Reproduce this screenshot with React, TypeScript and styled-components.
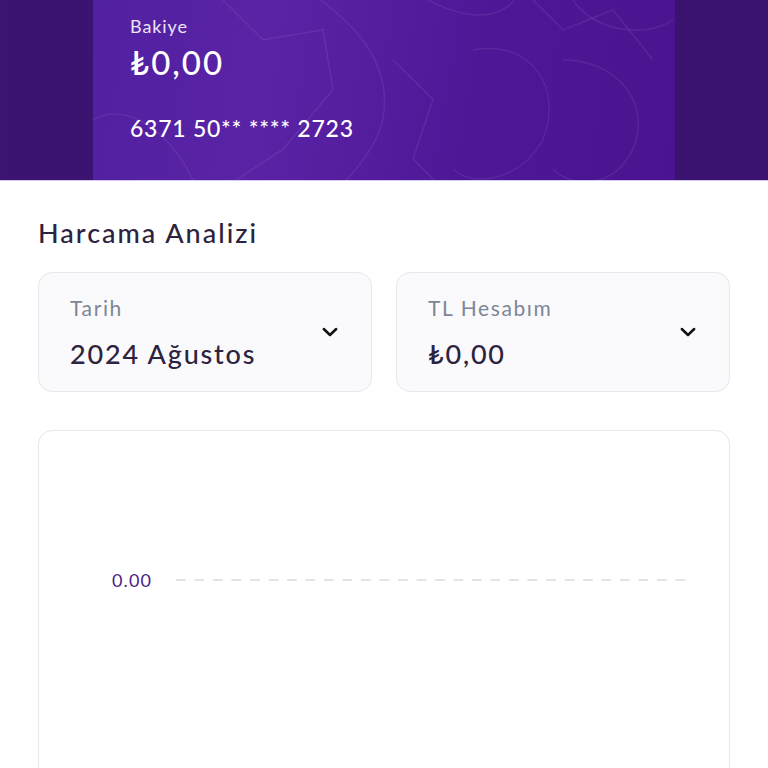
import React from "react";
import styled, { createGlobalStyle } from "styled-components";

const Global = createGlobalStyle`
  html, body { margin: 0; padding: 0; background: #ffffff; }
  body { font-family: "Lato", "Noto Sans", sans-serif; }
  * { box-sizing: border-box; }
`;

const Page = styled.div`
  width: 768px;
  height: 768px;
  overflow: hidden;
  background: #ffffff;
  display: flex;
  flex-direction: column;
`;

const Header = styled.div`
  height: 181px;
  flex: none;
  background: linear-gradient(90deg, #3b1472 0%, #3a1270 100%);
  display: flex;
  justify-content: center;
  border-bottom: 1px solid #d9c8f2;
`;

const Card = styled.div`
  position: relative;
  width: 582px;
  height: 100%;
  overflow: hidden;
  background: linear-gradient(100deg, #5120a0 0%, #5a23a6 30%, #4d1896 65%, #4a1490 100%);
  padding: 0 37px;
  display: flex;
  flex-direction: column;
  color: #ffffff;
`;

const Pattern = styled.svg`
  position: absolute;
  inset: 0;
  width: 100%;
  height: 100%;
  pointer-events: none;
`;

const CardContent = styled.div`
  position: relative;
  display: flex;
  flex-direction: column;
`;

const BalanceLabel = styled.div`
  margin-top: 14px;
  font-size: 18px;
  line-height: 24px;
  color: #ece4f8;
  letter-spacing: 0.9px;
`;

const BalanceValue = styled.div`
  margin-top: 9px;
  font-size: 33px;
  line-height: 30px;
  font-weight: 500;
  letter-spacing: 2px;
`;

const CardNumber = styled.div`
  margin-top: 38px;
  font-size: 23px;
  line-height: 26px;
  font-weight: 500;
  letter-spacing: 0.75px;
`;

const Body = styled.div`
  padding: 0 38px;
  display: flex;
  flex-direction: column;
`;

const Title = styled.h2`
  margin: 36px 0 0;
  font-size: 27px;
  line-height: 32px;
  font-weight: 500;
  color: #2d2340;
  letter-spacing: 2px;
`;

const SelectRow = styled.div`
  margin-top: 23px;
  display: grid;
  grid-template-columns: 1fr 1fr;
  gap: 24px;
`;

const Select = styled.div`
  height: 120px;
  border: 1.5px solid #e7e7ec;
  border-radius: 14px;
  background: #fafafc;
  padding: 0 33px 0 31px;
  display: flex;
  align-items: center;
  justify-content: space-between;
`;

const SelectText = styled.div`
  display: flex;
  flex-direction: column;
  gap: 18px;
  margin-top: 2px;
`;

const SelectLabel = styled.div`
  font-size: 21px;
  line-height: 24px;
  color: #7d8696;
  letter-spacing: 1.6px;
`;

const SelectValue = styled.div`
  font-size: 27px;
  line-height: 32px;
  font-weight: 500;
  color: #2d2340;
  letter-spacing: 1.8px;
`;

const Chart = styled.div`
  margin-top: 38px;
  height: 360px;
  border: 1.5px solid #e7e7ec;
  border-radius: 14px;
  background: #ffffff;
  padding: 137px 36px 0 73px;
  display: flex;
  flex-direction: column;
`;

const AxisRow = styled.div`
  display: flex;
  align-items: center;
  gap: 20px;
`;

const AxisLabel = styled.div`
  font-size: 18px;
  line-height: 24px;
  color: #4a1d8a;
  width: 44px;
  letter-spacing: 1.1px;
`;

const DashLine = styled.div`
  flex: 1;
  height: 2px;
  background-image: linear-gradient(90deg, #e3e3e8 0 10px, transparent 10px 18px);
  background-size: 18.5px 2px;
  background-repeat: repeat-x;
`;

const Chevron = () => (
  <svg width="16" height="10" viewBox="0 0 16 10" fill="none">
    <path d="M1.8 2 L8 8 L14.2 2" stroke="#111" strokeWidth="2.5" strokeLinecap="round" strokeLinejoin="round" />
  </svg>
);

export default function App() {
  return (
    <Page>
      <Global />
      <Header>
        <Card>
          <Pattern viewBox="0 0 582 181" preserveAspectRatio="none">
            <g fill="none" stroke="rgba(255,255,255,0.07)" strokeWidth="1.5">
              <path d="M120 -10 L170 40 L230 30 L240 90 L190 150 L130 190" />
              <path d="M200 -20 C260 20 300 60 290 120 C280 160 250 180 240 200" />
              <path d="M320 -10 C360 20 420 30 430 -20" />
              <path d="M300 60 L340 100 L320 160 L360 200" />
              <path d="M380 50 C440 40 470 90 450 140 C430 180 380 190 360 170" />
              <path d="M420 -20 L470 30 L520 10 L560 60" />
              <path d="M470 60 C520 60 560 100 540 150 C520 190 480 190 460 170" />
              <path d="M0 120 C40 100 80 140 100 181" />
              <path d="M480 0 C500 30 550 40 580 20" />
            </g>
          </Pattern>
          <CardContent>
            <BalanceLabel>Bakiye</BalanceLabel>
            <BalanceValue>₺0,00</BalanceValue>
            <CardNumber>6371 50** **** 2723</CardNumber>
          </CardContent>
        </Card>
      </Header>
      <Body>
        <Title>Harcama Analizi</Title>
        <SelectRow>
          <Select>
            <SelectText>
              <SelectLabel>Tarih</SelectLabel>
              <SelectValue>2024 Ağustos</SelectValue>
            </SelectText>
            <Chevron />
          </Select>
          <Select>
            <SelectText>
              <SelectLabel>TL Hesabım</SelectLabel>
              <SelectValue>₺0,00</SelectValue>
            </SelectText>
            <Chevron />
          </Select>
        </SelectRow>
        <Chart>
          <AxisRow>
            <AxisLabel>0.00</AxisLabel>
            <DashLine />
          </AxisRow>
        </Chart>
      </Body>
    </Page>
  );
}
